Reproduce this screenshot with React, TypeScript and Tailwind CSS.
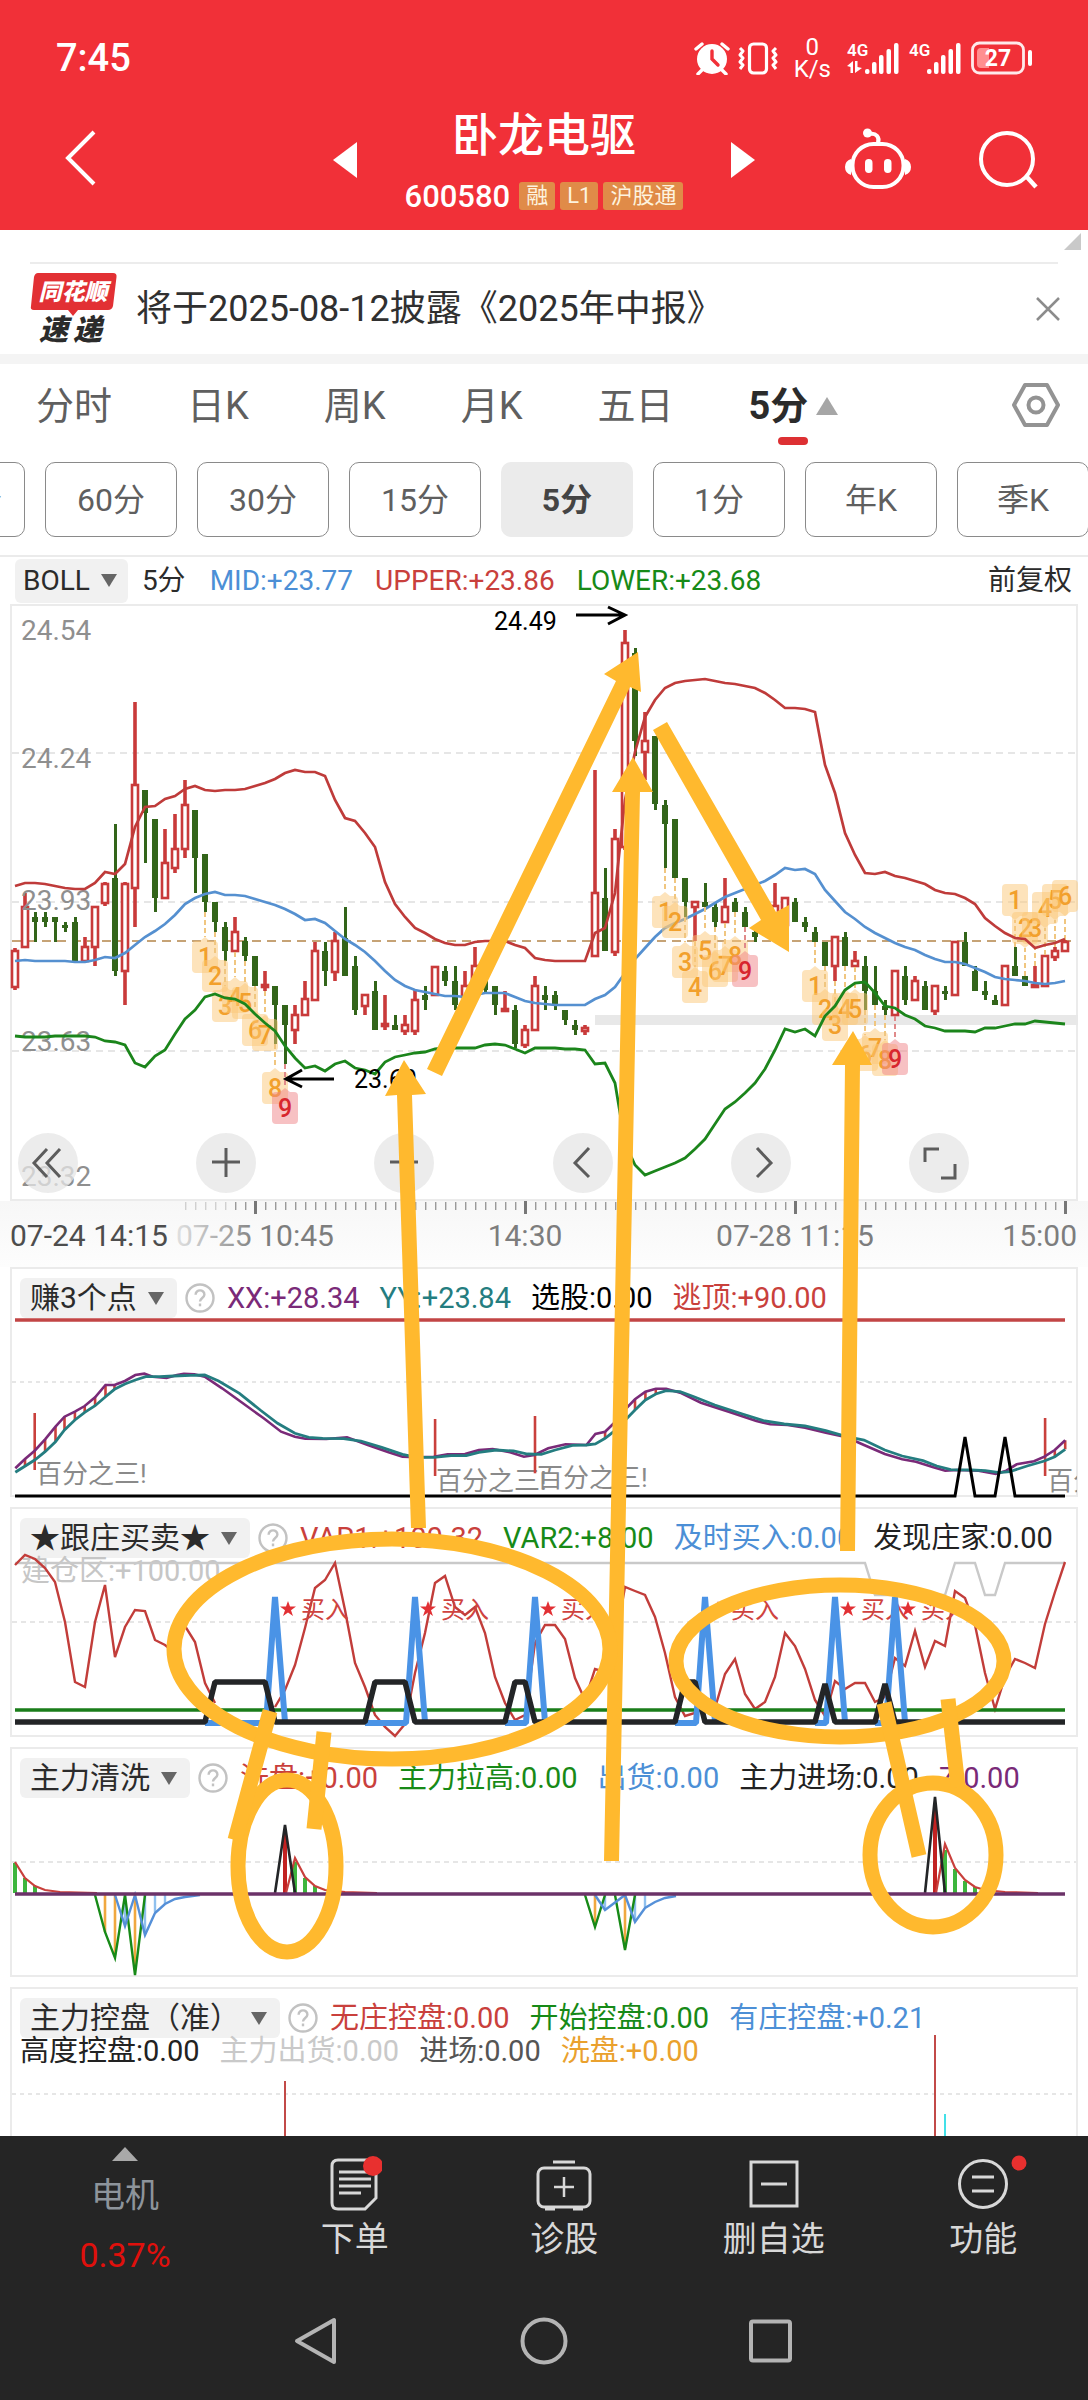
import type { ReactNode } from "react";

type Candle = [kind: "r" | "g", high: number, top: number, bottom: number, low: number];

const RED = "#bf3b3a";
const GREEN = "#33651a";
const ORANGE = "#ffb92e";

const barX = (i: number) => 15 + i * 10;

const candles: (Candle | null)[] = [
  ["r", 948, 951, 987, 990], ["r", 893, 907, 947, 948], ["g", 912, 917, 922, 942], ["g", 912, 917, 922, 927],
  ["g", 917, 917, 922, 942], ["g", 922, 925, 928, 932], ["g", 917, 922, 962, 962], ["r", 937, 947, 961, 962],
  ["r", 906, 907, 947, 966], ["r", 882, 884, 903, 906], ["g", 824, 878, 971, 976], ["r", 882, 884, 971, 1005],
  ["r", 702, 785, 888, 927], ["g", 790, 790, 813, 863], ["g", 819, 819, 898, 912], ["r", 829, 863, 898, 899],
  ["r", 814, 849, 868, 873], ["r", 780, 805, 849, 858], ["g", 810, 810, 858, 893], ["g", 854, 854, 902, 912],
  ["g", 902, 902, 922, 932], ["g", 922, 927, 951, 961], ["r", 917, 932, 951, 952], ["g", 937, 941, 956, 961],
  ["g", 956, 956, 986, 986], ["r", 971, 985, 987, 991], ["g", 986, 986, 1005, 1044], ["g", 1005, 1005, 1025, 1064],
  ["r", 1005, 1015, 1030, 1044], ["r", 981, 999, 1015, 1016], ["r", 942, 951, 1000, 1001], ["g", 942, 951, 971, 986],
  ["r", 932, 941, 972, 981], ["g", 907, 938, 976, 976], ["g", 956, 966, 1010, 1015], ["r", 994, 995, 1006, 1015],
  ["g", 981, 991, 1030, 1030], ["r", 995, 1024, 1026, 1030], ["g", 1015, 1025, 1030, 1030], ["r", 1015, 1025, 1031, 1035],
  ["r", 990, 1000, 1031, 1035], ["g", 986, 995, 1000, 1010], ["r", 966, 967, 995, 996], ["g", 966, 971, 981, 986],
  ["g", 966, 981, 1005, 1010], ["r", 971, 986, 997, 1005], ["r", 947, 966, 987, 990], ["g", 966, 976, 990, 994],
  ["g", 986, 986, 1005, 1015], ["r", 991, 1009, 1011, 1012], ["g", 1005, 1010, 1044, 1048], ["r", 1025, 1030, 1045, 1048],
  ["r", 976, 986, 1030, 1031], ["g", 986, 995, 1000, 1010], ["g", 991, 995, 1005, 1010], ["g", 1010, 1010, 1020, 1025],
  ["g", 1020, 1025, 1030, 1035], ["r", 1025, 1028, 1031, 1035], ["r", 770, 893, 956, 957], ["g", 868, 898, 951, 951],
  ["r", 829, 839, 952, 956], ["r", 630, 643, 847, 850], ["g", 648, 653, 741, 756], ["r", 712, 741, 752, 780],
  ["g", 736, 736, 804, 810], ["g", 800, 805, 824, 868], ["g", 819, 819, 878, 878], ["g", 878, 878, 902, 917],
  ["r", 901, 902, 907, 941], ["g", 883, 902, 907, 907], ["g", 902, 907, 922, 927], ["r", 878, 907, 922, 923],
  ["g", 898, 902, 912, 912], ["g", 907, 912, 927, 927], ["g", 925, 932, 937, 942], null,
  ["r", 883, 906, 930, 932], ["r", 897, 898, 925, 926], ["g", 898, 902, 922, 922], ["g", 917, 922, 927, 932],
  ["g", 927, 932, 942, 942], ["g", 942, 942, 966, 966], ["r", 936, 937, 966, 981], ["g", 932, 937, 966, 966],
  ["r", 951, 961, 966, 967], ["g", 956, 966, 991, 1010], ["g", 966, 991, 1005, 1005], ["g", 1000, 1006, 1010, 1015],
  ["r", 970, 971, 1015, 1016], ["g", 966, 976, 1000, 1005], ["r", 976, 981, 1000, 1001], ["g", 981, 986, 1010, 1010],
  ["r", 985, 986, 1011, 1015], ["g", 986, 991, 994, 1000], ["r", 941, 942, 995, 996], ["g", 932, 942, 966, 966],
  ["g", 966, 971, 991, 991], ["g", 981, 991, 995, 1000], ["g", 995, 1000, 1005, 1005], ["r", 965, 966, 1005, 1006],
  ["g", 947, 966, 976, 976], ["g", 976, 976, 986, 986], ["r", 966, 985, 987, 988], ["r", 955, 956, 986, 987],
  ["r", 947, 951, 957, 961], ["r", 940, 942, 951, 952],
];

const upper = [
  886, 883, 883, 884, 886, 888, 889, 889, 883, 872, 874, 864, 827, 807, 806, 799, 796, 789, 786, 790, 791, 790, 790, 789,
  786, 783, 779, 773, 770, 772, 772, 776, 800, 818, 821, 833, 847, 882, 904, 917, 928, 933, 939, 943, 945, 945, 942, 941,
  941, 941, 945, 948, 958, 960, 961, 961, 961, 961, 933, 928, 893, 800, 752, 717, 700, 688, 683, 681, 680, 679, 681, 683,
  684, 686, 688, 693, 700, 708, 708, 709, 712, 765, 793, 833, 855, 873, 874, 872, 876, 878, 881, 884, 890, 893, 894, 898,
  904, 918, 926, 933, 938, 939, 948, 945, 943, 939,
];
const middle = [
  961, 960, 961, 961, 961, 961, 962, 962, 960, 957, 958, 953, 945, 937, 931, 924, 915, 904, 898, 894, 892, 895, 895, 896,
  899, 902, 905, 909, 914, 920, 919, 923, 931, 939, 945, 952, 961, 971, 980, 986, 990, 992, 994, 996, 996, 997, 995, 993,
  993, 993, 997, 1001, 1003, 1004, 1005, 1005, 1005, 1005, 999, 995, 987, 973, 959, 948, 937, 928, 923, 919, 914, 909,
  903, 897, 893, 889, 885, 881, 875, 868, 870, 869, 874, 890, 901, 912, 919, 927, 933, 938, 943, 947, 950, 955, 959, 962,
  962, 964, 968, 972, 977, 979, 980, 981, 983, 984, 983, 981,
];
const lower = [
  1036, 1037, 1037, 1037, 1036, 1036, 1036, 1036, 1037, 1041, 1042, 1045, 1063, 1067, 1056, 1050, 1034, 1019, 1010, 997,
  994, 998, 999, 1004, 1014, 1023, 1031, 1046, 1058, 1068, 1066, 1071, 1064, 1061, 1068, 1070, 1074, 1062, 1057, 1055,
  1053, 1052, 1049, 1048, 1048, 1048, 1048, 1045, 1044, 1045, 1049, 1053, 1048, 1048, 1048, 1049, 1049, 1050, 1064, 1063,
  1083, 1143, 1165, 1175, 1171, 1167, 1163, 1158, 1149, 1139, 1124, 1109, 1102, 1093, 1083, 1069, 1050, 1029, 1032, 1029,
  1036, 1016, 1006, 990, 983, 982, 993, 1006, 1008, 1015, 1019, 1026, 1028, 1031, 1031, 1031, 1032, 1028, 1028, 1026,
  1024, 1024, 1021, 1022, 1023, 1024,
];

// [bar index, label, badge centre]
const marksBelow: [number, number, number][] = [
  [19, 1, 957], [20, 2, 976], [21, 3, 1006], [22, 4, 997], [23, 5, 1003], [24, 6, 1030], [25, 7, 1035], [26, 8, 1088], [27, 9, 1108],
  [65, 1, 912], [66, 2, 922], [67, 3, 962], [68, 4, 987], [69, 5, 951], [70, 6, 971], [71, 7, 966], [72, 8, 956], [73, 9, 971],
  [80, 1, 986], [81, 2, 1009], [82, 3, 1025], [83, 4, 1009], [84, 5, 1009], [85, 6, 1055], [86, 7, 1048], [87, 8, 1060], [88, 9, 1059],
];
const marksAbove: [number, number, number][] = [
  [100, 1, 900], [101, 2, 928], [102, 3, 928], [103, 4, 908], [104, 5, 900], [105, 6, 896],
];

const series = (values: number[], start = 0) => values.map((v, i) => `${barX(start + i)},${v}`).join(" ");

// Oscillator points are stored on a 1568 x 720 grid per panel.
const onGrid = (points: number[][], top: number) =>
  points.map(([x, y]) => `${(x / 1.441).toFixed(1)},${(top + y / 3).toFixed(1)}`).join(" ");

const yyLine = [
  [22, 637], [50, 600], [65, 575], [80, 545], [93, 510], [108, 480], [122, 457], [137, 437], [152, 410], [165, 388],
  [180, 372], [195, 360], [210, 350], [230, 350], [250, 348], [275, 346], [295, 345], [315, 363], [345, 400], [375, 450],
  [400, 490], [425, 520], [445, 532], [465, 535], [495, 536], [520, 543], [550, 562], [580, 583], [600, 592], [625, 592],
  [650, 587], [672, 587], [690, 577], [715, 570], [740, 573], [760, 582], [780, 583], [800, 570], [825, 556], [845, 555],
  [858, 552], [872, 535], [886, 512], [900, 482], [915, 450], [930, 420], [945, 402], [960, 392], [980, 395], [1000, 410],
  [1030, 435], [1070, 462], [1100, 482], [1130, 492], [1160, 498], [1190, 512], [1220, 530], [1245, 540], [1275, 570],
  [1300, 588], [1330, 602], [1350, 618], [1370, 629], [1400, 630], [1420, 632], [1440, 638], [1455, 635], [1480, 618],
  [1505, 603], [1520, 590], [1535, 568],
];
const xxLine = [
  [22, 625], [36, 597], [50, 572], [65, 538], [80, 500], [93, 470], [108, 455], [122, 438], [137, 412], [152, 375],
  [165, 375], [180, 363], [195, 345], [208, 341], [220, 350], [240, 354], [255, 345], [265, 341], [280, 343], [295, 350],
  [320, 385], [350, 430], [380, 475], [405, 515], [425, 530], [440, 536], [470, 537], [500, 532], [530, 555], [560, 577],
  [580, 590], [600, 592], [625, 590], [645, 583], [670, 582], [690, 570], [710, 567], [735, 577], [755, 590], [770, 585],
  [790, 565], [815, 553], [845, 555], [858, 522], [872, 515], [886, 487], [900, 450], [915, 418], [930, 395], [945, 386],
  [960, 386], [980, 398], [1010, 428], [1050, 455], [1090, 483], [1110, 493], [1135, 495], [1160, 503], [1190, 518],
  [1220, 532], [1245, 555], [1275, 582], [1300, 598], [1320, 605], [1345, 622], [1362, 632], [1380, 630], [1410, 632],
  [1435, 642], [1450, 632], [1465, 613], [1490, 604], [1505, 590], [1520, 570], [1535, 541],
];
// [x, from, to]
const spreadBars = [
  [36, 597, 620], [65, 538, 575], [80, 500, 545], [93, 470, 510], [108, 455, 480], [122, 438, 457], [137, 412, 437],
  [152, 375, 410], [165, 375, 388], [872, 515, 535], [886, 487, 512], [915, 418, 450], [930, 395, 420], [945, 386, 402],
  [1520, 570, 590], [1535, 541, 568],
  [50, 459, 630], [627, 477, 648], [771, 468, 640], [1506, 474, 648],
];

const varScale = (v: number) => Math.round(1500 + v / 3);
const varFirst = [
  195, 165, 177, 203, 247, 365, 545, 560, 365, 255, 472, 380, 330, 333, 420, 435, 460, 378, 425, 550, 610,
].map(varScale);
const varSecond = [
  620, 570, 495, 385, 265, 240, 190, 330, 490, 560, 645, 682, 708, 672, 520, 400, 250, 227, 320, 345, 320, 400, 530, 610,
  660, 645, 430, 375, 375, 418, 535, 600, 507, 515, 430, 262, 272, 285, 352, 460, 590, 648, 640, 600, 625, 522, 478, 583,
  627, 605, 530, 400, 437, 508, 600, 648, 543, 568, 548, 548, 605, 590, 475, 498, 393, 500, 423, 437, 272, 295, 375, 520,
  627, 530, 478, 490, 503, 372, 275, 187,
].map(varScale);
const buyPeaks: [number, number][] = [[275, 205], [415, 365], [535, 505], [705, 675], [835, 815], [895, 875]];

function Chip({ name }: { name: string }) {
  return (
    <button
      type="button"
      className="flex h-10 items-center gap-2.5 rounded-md bg-[#f1f1f1] pl-2.5 pr-3 text-[30px] leading-none text-[#2b2b2b]"
    >
      {name}
      <svg viewBox="0 0 18 13" className="w-4.5" aria-hidden="true">
        <path d="M1 0H17L9 13Z" fill="#666" />
      </svg>
    </button>
  );
}

function Help() {
  return (
    <button type="button" aria-label="指标说明" className="ml-2 mr-3 shrink-0">
      <svg viewBox="0 0 30 30" className="w-7.5" fill="none" stroke="#c2c2c2" strokeWidth="2.4">
        <circle cx="15" cy="15" r="13.5" />
        <path d="M10.6 11.8c0-6 9-5.6 8.8-.2-.2 3.4-4.4 3.4-4.4 7" />
        <path d="M15 20.5v2.8" />
      </svg>
    </button>
  );
}

type Item = [text: string, color: string];

function Values({ items }: { items: Item[] }) {
  return (
    <div className="flex gap-5 whitespace-nowrap text-[29px] leading-none">
      {items.map(([text, color]) => (
        <span key={text} className={color}>
          {text}
        </span>
      ))}
    </div>
  );
}

function Panel({
  name,
  items,
  extra,
  top,
  height,
  open = false,
  children,
}: {
  name: string;
  items: Item[];
  extra?: Item[];
  top: number;
  height: number;
  open?: boolean;
  children: ReactNode;
}) {
  return (
    <section
      className={`mx-2.5 border-2 border-[#ebebeb] bg-white ${open ? "border-b-0" : "mb-2.5"}`}
      aria-label={name}
    >
      <div className="flex h-[50px] items-center pl-2 pt-2">
        <Chip name={name} />
        <Help />
        <Values items={items} />
      </div>
      {extra && (
        <div className="flex h-[31px] items-center pb-1.5 pl-2">
          <Values items={extra} />
        </div>
      )}
      <svg viewBox={`12 ${top} 1064 ${height}`} className="block h-auto w-full overflow-visible" fill="none">
        {children}
      </svg>
    </section>
  );
}

function Badge({ i, n, y, from, above = false }: { i: number; n: number; y: number; from: number; above?: boolean }) {
  const x = barX(i);
  const red = n === 9;
  const edge = above ? y + 20 : y - 20;
  return (
    <g>
      <path d={`M${x} ${from}V${edge}`} stroke={red ? "#e08a8a" : "#f0c680"} strokeWidth="2" strokeDasharray="5 3" />
      <path
        d={
          above
            ? `M${x - 9} ${y - 16}h18q4 0 4 4v24q0 4 -4 4h-4l-5 4l-5 -4h-4q-4 0 -4 -4v-24q0 -4 4 -4z`
            : `M${x - 9} ${y - 16}h4l5 -4l5 4h4q4 0 4 4v24q0 4 -4 4h-18q-4 0 -4 -4v-24q0 -4 4 -4z`
        }
        fill={red ? "#f08488" : "#fcc778"}
        fillOpacity="0.5"
      />
      <text x={x} y={y + 9} textAnchor="middle" fontSize="25" fontWeight="500" fill={red ? "#d8262e" : "#f2a02c"}>
        {n}
      </text>
    </g>
  );
}

function PriceChart() {
  return (
    <svg viewBox="12 606 1064 593" className="block h-auto w-full overflow-visible" fill="none">
      <rect x="595" y="1015" width="483" height="10" fill="#e8e8e8" />
      {[753, 902, 1051].map((y) => (
        <path key={y} d={`M12 ${y}H1076`} stroke="#dedede" strokeWidth="1.5" strokeDasharray="7 5" />
      ))}
      <path d="M12 941H1076" stroke="#c6a376" strokeWidth="1.8" strokeDasharray="9 6" />
      {candles.map((c, i) => {
        if (!c) return null;
        const [kind, high, top, bottom, low] = c;
        const x = barX(i);
        return kind === "g" ? (
          <g key={i} fill={GREEN}>
            <rect x={x - 1} y={high} width="3" height={low - high} />
            <rect x={x - 3} y={top} width="6" height={Math.max(bottom - top, 2)} />
          </g>
        ) : (
          <g key={i} stroke="#c93a3a">
            <path d={`M${x} ${high}V${top}M${x} ${bottom}V${low}`} strokeWidth="3.6" />
            <rect x={x - 3} y={top} width="6" height={Math.max(bottom - top, 2)} fill="#fff" strokeWidth="2.6" />
          </g>
        );
      })}
      <polyline points={series(middle)} stroke="#5590d0" strokeWidth="2.7" />
      <g fill="#8f8f8f" fontSize="28">
        <text x="21" y="640">24.54</text>
        <text x="21" y="768">24.24</text>
        <text x="21" y="910">23.93</text>
        <text x="21" y="1051">23.63</text>
        <text x="21" y="1186">23.32</text>
      </g>
      {marksBelow.map(([i, n, y]) => (
        <Badge key={i} i={i} n={n} y={y} from={candles[i]?.[4] ?? y} />
      ))}
      {marksAbove.map(([i, n, y]) => (
        <Badge key={i} i={i} n={n} y={y} from={candles[i]?.[1] ?? y} above />
      ))}
      <polyline points={series(upper)} stroke={RED} strokeWidth="2.7" />
      <polyline points={series(lower)} stroke="#1b851b" strokeWidth="2.8" />
      <g fill="#000" fontSize="25">
        <text x="494" y="630">24.49</text>
        <text x="354" y="1088">23.60</text>
      </g>
      <g stroke="#000" strokeWidth="3">
        <path d="M576 615H624M608 607L625 615L608 624" />
        <path d="M334 1079H287M302 1070L286 1079L302 1087" />
      </g>
    </svg>
  );
}

const controls: [string, string][] = [
  ["回到最早", "M29 16L16 30L29 44M42 16L29 30L42 44"],
  ["放大", "M30 15V44M16 29H44"],
  ["缩小", "M16 29H44"],
  ["向左", "M36 15L22 30L36 44"],
  ["向右", "M26 15L40 30L26 44"],
  ["全屏", "M16 29V16H30M32 45H46V31"],
];

function TimeAxis() {
  const ticks = Array.from({ length: 89 }, (_, i) => 185 + i * 10);
  return (
    <svg viewBox="12 1201 1064 66" className="block h-auto w-full overflow-visible">
      <defs>
        <linearGradient id="axisFade" gradientUnits="userSpaceOnUse" x1="175" x2="260" y1="0" y2="0">
          <stop offset="0" stopColor="#e2e2e2" />
          <stop offset="1" stopColor="#7d7d7d" />
        </linearGradient>
      </defs>
      {ticks.map((x, i) => (
        <rect key={x} x={x} y="1202" width="1.4" height="8" fill={i < 5 ? "#d0d0d0" : "#9a9a9a"} />
      ))}
      {[254, 524, 794, 1064].map((x) => (
        <rect key={x} x={x} y="1201" width="3" height="13" fill="#777" />
      ))}
      <g fontSize="30" fill="#7d7d7d">
        <text x="10" y="1246" fill="#4d4d4d">07-24 14:15</text>
        <text x="176" y="1246" fill="url(#axisFade)">07-25 10:45</text>
        <text x="525" y="1246" textAnchor="middle">14:30</text>
        <text x="795" y="1246" textAnchor="middle">07-28 11:15</text>
        <text x="1077" y="1246" textAnchor="end">15:00</text>
      </g>
    </svg>
  );
}

function Annotations() {
  return (
    <svg
      viewBox="0 604 1088 1532"
      className="pointer-events-none absolute inset-x-0 top-0 h-auto w-full"
      fill={ORANGE}
      aria-hidden="true"
    >
      <path d="M427 1069L616 681L604 674L638 652L641 692L630 687L442 1076Z" />
      <path d="M653 730L761 920L749 928L789 952L789 905L776 912L667 722Z" />
      <path d="M604 1861L625 792H612L633 757L653 792H640L619 1861Z" />
      <path d="M411 1528L397 1095L385 1096L404 1060L426 1094L412 1095L426 1528Z" />
      <path d="M840 1551L845 1065H832L853 1031L872 1065H860L855 1551Z" />
      <g fill="none" stroke={ORANGE} strokeWidth="15">
        <ellipse cx="392" cy="1649" rx="218" ry="110" />
        <ellipse cx="840" cy="1661" rx="164" ry="76" />
        <ellipse cx="287" cy="1866" rx="49" ry="86" />
        <ellipse cx="933" cy="1855" rx="63" ry="72" />
        <path d="M270 1711L235 1840M324 1732L314 1829M884 1703L919 1856M948 1699L958 1787" />
      </g>
    </svg>
  );
}

function Signal({ arrows = false }: { arrows?: boolean }) {
  return (
    <svg viewBox="0 0 52 34" className="w-13 overflow-visible" fill="#fff" aria-label="4G">
      <text x="0" y="15" fontSize="17" fontWeight="600">4G</text>
      {arrows && <path d="M0 25L6 20V32H3.500V26ZM8 20H10.500V26L15 27L8 32Z" />}
      <rect x="18" y="28" width="4.500" height="5" rx="2" />
      <rect x="25" y="21" width="4.500" height="12" rx="2" />
      <rect x="32" y="14" width="4.500" height="19" rx="2" />
      <rect x="39.500" y="8" width="4.500" height="25" rx="2" />
      <rect x="47" y="2" width="4.500" height="31" rx="2" />
    </svg>
  );
}

function StatusBar() {
  return (
    <div className="flex h-[100px] items-center justify-between pl-14 pr-[55px] pt-4 text-white">
      <span className="text-[38px] font-medium leading-none">7:45</span>
      <div className="flex items-center">
        <svg viewBox="0 0 36 34" className="w-9" aria-label="闹钟">
          <circle cx="18" cy="18" r="15" fill="#fff" />
          <path d="M2 8L8 3M28 3L34 8M8 29L4 33M28 29L32 33" stroke="#fff" strokeWidth="3.400" strokeLinecap="round" />
          <path d="M18 10V18L24 24" stroke="#f13038" strokeWidth="3.400" fill="none" strokeLinecap="round" />
        </svg>
        <svg viewBox="0 0 40 34" className="ml-2 w-10" fill="none" stroke="#fff" strokeLinejoin="round" aria-label="振动">
          <rect x="11.500" y="3" width="17" height="29" rx="4" strokeWidth="3.200" />
          <path d="M2 7L5 10L2 14L5 17L2 21L5 24L2 28M38 7L35 10L38 14L35 17L38 21L35 24L38 28" strokeWidth="3" />
        </svg>
        <span className="mx-4 text-center text-[24px] leading-[22px]">
          0
          <br />
          K/s
        </span>
        <Signal arrows />
        <span className="w-2.5" />
        <Signal />
        <svg viewBox="0 0 62 34" className="ml-2.5 w-[62px]" aria-label="电量 27%">
          <rect x="1.500" y="2" width="51" height="30" rx="7" fill="none" stroke="#fff" strokeOpacity="0.9" strokeWidth="2.800" />
          <path d="M10 7H18V27H10Q6 27 6 23V11Q6 7 10 7Z" fill="#ff8f90" />
          <rect x="57" y="9" width="4" height="16" rx="2" fill="#fff" />
          <text x="27" y="25" textAnchor="middle" fontSize="23" fontWeight="700" fill="#fff">27</text>
        </svg>
      </div>
    </div>
  );
}

function TitleBar() {
  return (
    <div className="grid h-[130px] grid-cols-[1fr_422px_1fr] items-start text-white">
      <button type="button" aria-label="返回" className="ml-[62px] mt-[29px] w-9">
        <svg viewBox="0 0 36 58" fill="none" stroke="#fff" strokeWidth="4">
          <path d="M32 3L6 29L32 55" />
        </svg>
      </button>
      <div className="flex items-start justify-between">
        <button type="button" aria-label="上一只" className="mt-[42px] w-6">
          <svg viewBox="0 0 24 36" fill="#fff">
            <path d="M24 0V36L0 18Z" />
          </svg>
        </button>
        <div className="flex flex-col items-center pt-2.5">
          <h1 className="text-[46px] font-medium leading-[50px]">卧龙电驱</h1>
          <div className="mt-4.5 flex h-9 items-center gap-[5px] text-[22px]">
            <span className="mr-1 text-[31px] font-medium leading-none">600580</span>
            {["融", "L1", "沪股通"].map((tag) => (
              <span key={tag} className="flex h-7 items-center rounded-[3px] bg-[#e08b48] px-[7px] leading-none text-[#fdf3df]">
                {tag}
              </span>
            ))}
          </div>
        </div>
        <button type="button" aria-label="下一只" className="mt-[42px] w-6">
          <svg viewBox="0 0 24 36" fill="#fff">
            <path d="M0 0V36L24 18Z" />
          </svg>
        </button>
      </div>
      <div className="mt-[27px] flex justify-end gap-[66px] pr-[50px]">
        <button type="button" aria-label="智能助手" className="w-17">
          <svg viewBox="0 0 68 64" fill="none" stroke="#fff" strokeWidth="4">
            <rect x="8.500" y="17" width="51" height="43" rx="21" />
            <path d="M34 16C36 10 32 6 26 7" strokeLinecap="round" />
            <circle cx="23.500" cy="6" r="4.500" fill="#fff" stroke="none" />
            <path d="M7 32Q1 34 1 40Q1 46 7 48ZM61 32Q67 34 67 40Q67 46 61 48Z" fill="#fff" stroke="none" />
            <rect x="21" y="32" width="7.500" height="14" rx="3.700" fill="#fff" stroke="none" />
            <rect x="40" y="32" width="7.500" height="14" rx="3.700" fill="#fff" stroke="none" />
          </svg>
        </button>
        <button type="button" aria-label="搜索" className="w-[60px]">
          <svg viewBox="0 0 60 64" fill="none" stroke="#fff" strokeWidth="4">
            <circle cx="29" cy="32" r="26" />
            <path d="M48 49L58 60" strokeWidth="4.500" />
          </svg>
        </button>
      </div>
    </div>
  );
}

function Notice() {
  return (
    <div className="flex h-[90px] items-center pl-7.5 pr-7">
      <svg viewBox="0 0 88 72" className="w-[88px] shrink-0 overflow-visible" aria-label="同花顺速递">
        <path d="M8 0H83Q87 0 86.500 4L83 33Q82 37 78 37H48L43 43L38 37H4Q0 37 1 33L4 4Q5 0 8 0Z" fill="#e23034" />
        <g fontWeight="900" fontStyle="italic">
          <text x="43" y="27" textAnchor="middle" fontSize="23" fill="#fff">同花顺</text>
          <text x="9" y="67" fontSize="29" fill="#2b2b2b">速</text>
          <text x="43" y="67" fontSize="29" fill="#2b2b2b">递</text>
        </g>
      </svg>
      <a href="#notice" className="ml-4.5 flex-1 whitespace-nowrap text-[36px] leading-none text-[#303030]">
        将于2025-08-12披露《2025年中报》
      </a>
      <button type="button" aria-label="关闭" className="w-6">
        <svg viewBox="0 0 24 24" fill="none" stroke="#8c8c8c" strokeWidth="2.500">
          <path d="M1 1L23 23M23 1L1 23" />
        </svg>
      </button>
    </div>
  );
}

function PeriodTabs() {
  return (
    <nav className="flex h-[98px] items-center pl-9 pr-7 text-[38px] leading-none text-[#5f5f5f]" aria-label="周期">
      <div className="flex flex-1 items-center gap-[75px] whitespace-nowrap">
        {["分时", "日K", "周K", "月K", "五日"].map((t) => (
          <button type="button" key={t} className="pb-3.5">
            {t}
          </button>
        ))}
        <button type="button" aria-current="true" className="relative flex items-center gap-2 pb-3.5 font-bold text-[#2b2b2b]">
          5分
          <svg viewBox="0 0 22 18" className="w-5.5" aria-hidden="true">
            <path d="M11 0L22 18H0Z" fill="#a6a6a6" />
          </svg>
          <span className="absolute -bottom-1.5 left-1/2 h-2 w-7.5 -translate-x-1/2 rounded-full bg-[#dd3033]" />
        </button>
      </div>
      <button type="button" aria-label="图表设置" className="mb-4 w-12">
        <svg viewBox="0 0 48 48" fill="none" stroke="#939393" strokeWidth="4" strokeLinejoin="round">
          <path d="M13 4H35L46 24L35 44H13L2 24Z" />
          <circle cx="24" cy="24" r="7.500" />
        </svg>
      </button>
    </nav>
  );
}

function PeriodButtons() {
  return (
    <div className="flex gap-5 overflow-hidden pb-[18px] text-[32px] leading-none text-[#5f5f5f]">
      {["120分", "60分", "30分", "15分", "5分", "1分", "年K", "季K"].map((t, i) => (
        <button
          type="button"
          key={t}
          className={`h-[75px] w-33 shrink-0 rounded-[10px] ${
            t === "5分" ? "bg-[#ebebeb] font-bold text-[#444]" : "border border-[#8a8a8a]"
          } ${i === 0 ? "-ml-[107px]" : ""}`}
        >
          {t}
        </button>
      ))}
    </div>
  );
}

function BottomBar() {
  return (
    <footer className="h-[264px] bg-[#252525] text-[#d8d8d8]">
      <div className="grid h-[160px] grid-cols-[250px_repeat(4,1fr)] text-[34px] leading-none">
        <button type="button" className="flex flex-col items-center pt-[11px]">
          <svg viewBox="0 0 26 14" className="w-6.5" aria-hidden="true">
            <path d="M13 0L26 14H0Z" fill="#a9a9a9" />
          </svg>
          <span className="mt-[17px] text-[#8d949b]">电机</span>
          <span className="mt-[26px] text-[#e0100c]">0.37%</span>
        </button>
        <button type="button" className="flex flex-col items-center pt-5">
          <svg viewBox="0 0 54 56" className="h-14 w-13.5" fill="none" stroke="#d8d8d8" strokeWidth="3">
            <path d="M10 4H48V42L37 53H10Q4 53 4 47V10Q4 4 10 4Z" />
            <path d="M11 16H43M11 23H43M11 30H43M11 37H33" />
            <circle cx="45" cy="10" r="10" fill="#e8302f" stroke="none" />
          </svg>
          <span className="mt-2.5">下单</span>
        </button>
        <button type="button" className="flex flex-col items-center pt-5">
          <svg viewBox="0 0 56 56" className="size-14" fill="none" stroke="#d8d8d8" strokeWidth="3">
            <path d="M17 6H39" />
            <rect x="2" y="12" width="52" height="39" rx="6" />
            <path d="M28 21V41M18 31H38" strokeWidth="2.500" />
            <path d="M9 53H19M37 53H47" />
          </svg>
          <span className="mt-2.5">诊股</span>
        </button>
        <button type="button" className="flex flex-col items-center pt-5">
          <svg viewBox="0 0 56 56" className="size-14" fill="none" stroke="#d8d8d8" strokeWidth="3">
            <rect x="5" y="6" width="46" height="44" />
            <path d="M15 28H41" />
          </svg>
          <span className="mt-2.5">删自选</span>
        </button>
        <button type="button" className="flex flex-col items-center pt-5">
          <svg viewBox="0 0 56 56" className="size-14 overflow-visible" fill="none" stroke="#d8d8d8" strokeWidth="3">
            <circle cx="28" cy="28" r="23.500" />
            <path d="M17 21H39M17 35H39" />
            <circle cx="64" cy="7" r="7.500" fill="#e8302f" stroke="none" />
          </svg>
          <span className="mt-2.5">功能</span>
        </button>
      </div>
      <div className="flex items-center justify-center gap-[179px] pt-[20px]">
        <button type="button" aria-label="系统返回" className="w-12">
          <svg viewBox="0 0 48 50" fill="none" stroke="#b4b4b4" strokeWidth="4" strokeLinejoin="round">
            <path d="M41 4V46L4 25Z" />
          </svg>
        </button>
        <button type="button" aria-label="主屏幕" className="w-12">
          <svg viewBox="0 0 48 50" fill="none" stroke="#b4b4b4" strokeWidth="4">
            <circle cx="24" cy="25" r="21.500" />
          </svg>
        </button>
        <button type="button" aria-label="最近任务" className="w-12">
          <svg viewBox="0 0 48 50" fill="none" stroke="#b4b4b4" strokeWidth="4">
            <rect x="4" y="5.500" width="39" height="39" rx="2" />
          </svg>
        </button>
      </div>
    </footer>
  );
}

export default function App() {
  return (
    <div className="overflow-hidden bg-white font-['Roboto','Noto_Sans_CJK_SC',sans-serif]">
      <header className="bg-[#f13038]">
        <StatusBar />
        <TitleBar />
      </header>

      <div className="mx-7.5 flex h-[34px] items-start justify-end border-b-2 border-[#ececec] pt-[3px]">
        <svg viewBox="0 0 17 17" className="-mr-[23px] w-[17px]" aria-hidden="true">
          <path d="M17 0V17H0Z" fill="#c9c9c9" />
        </svg>
      </div>
      <Notice />
      <div className="h-2.5 bg-[#f4f4f4]" />
      <PeriodTabs />
      <PeriodButtons />

      <div className="flex h-[49px] items-center border-t-2 border-[#ebebeb] pl-[15px] pr-4 text-[28px] leading-none text-[#2b2b2b]">
        <button type="button" className="flex h-11 items-center gap-2.5 rounded-md bg-[#f1f1f1] pl-2 pr-2.5">
          BOLL
          <svg viewBox="0 0 18 13" className="w-4.5" aria-hidden="true">
            <path d="M1 0H17L9 13Z" fill="#666" />
          </svg>
        </button>
        <span className="ml-3.5 mr-6">5分</span>
        <div className="flex flex-1 gap-[22px] whitespace-nowrap">
          <span className="text-[#4c8fd6]">MID:+23.77</span>
          <span className="text-[#c9403c]">UPPER:+23.86</span>
          <span className="text-[#178a17]">LOWER:+23.68</span>
        </div>
        <span>前复权</span>
      </div>

      <main className="relative h-[1532px] overflow-hidden">
        <section className="relative mx-2.5 border-2 border-[#ebebeb]" aria-label="K线图">
          <PriceChart />
          <div className="absolute inset-x-0 bottom-1.5 flex justify-between pl-1.5 pr-[107px]">
            {controls.map(([label, d]) => (
              <button type="button" key={label} aria-label={label} className="size-15 rounded-full bg-[#e6e6e6]/75">
                <svg viewBox="0 0 60 60" fill="none" stroke="#5c5c5c" strokeWidth="3">
                  <path d={d} />
                </svg>
              </button>
            ))}
          </div>
        </section>
        <div className="bg-linear-to-b from-[#f7f7f7] to-[#fdfdfd] px-3">
          <TimeAxis />
        </div>

        <Panel
          name="赚3个点"
          top={1319}
          height={176}
          items={[
            ["XX:+28.34", "text-[#7a2a78]"],
            ["YY:+23.84", "text-[#247d80]"],
            ["选股:0.00", "text-black"],
            ["逃顶:+90.00", "text-[#c9403c]"],
          ]}
        >
          <path d="M12 1382H1076" stroke="#e6e6e6" strokeWidth="2" strokeDasharray="4 4" />
          <g fontSize="26" fill="#8a8a8a">
            <text x="36" y="1483">百分之三!</text>
            <text x="436" y="1490">百分之三!</text>
            <text x="537" y="1487">百分之三!</text>
            <svg x="1040" y="1460" width="37" height="40" viewBox="1040 1460 37 40">
              <text x="1047" y="1490">百分之三!</text>
            </svg>
          </g>
          {spreadBars.map(([x, a, b]) => (
            <polyline key={x} points={onGrid([[x, a], [x, b]], 1260)} stroke="#c9403c" strokeWidth="2.6" />
          ))}
          <polyline points={onGrid(xxLine, 1260)} stroke="#7a2a78" strokeWidth="2.6" />
          <polyline points={onGrid(yyLine, 1260)} stroke="#247d80" strokeWidth="2.8" />
          <path d="M15 1320H1065" stroke="#c24545" strokeWidth="3.4" />
          <path d="M15 1496H955L965 1437L975 1496H995L1005 1437L1015 1496H1065" stroke="#000" strokeWidth="3" />
        </Panel>

        <Panel
          name="★跟庄买卖★"
          top={1559}
          height={176}
          items={[
            ["VAR1:+100.32", "text-[#c9403c]"],
            ["VAR2:+8.00", "text-[#178a17]"],
            ["及时买入:0.00", "text-[#4c8fd6]"],
            ["发现庄家:0.00", "text-[#222]"],
          ]}
        >
          <path d="M12 1622H1076" stroke="#e6e6e6" strokeWidth="2" strokeDasharray="5 4" />
          <text x="21" y="1581" fontSize="29" fill="#c6c6c6">建仓区:+100.00</text>
          <path d="M15 1563H865L875 1595H945L955 1563H975L985 1595H995L1005 1563H1065" stroke="#c9c9c9" strokeWidth="2.4" />
          <g stroke="#c23d3a" strokeWidth="2.4">
            <polyline points={series(varFirst)} />
            <polyline points={series(varSecond, 26)} />
          </g>
          <path d="M15 1710H1065" stroke="#1a7d1a" strokeWidth="3.4" />
          {buyPeaks.map(([x, start]) => (
            <g key={x}>
              <path
                d={`M${start} 1723H${x - 9}L${x} 1597L${x + 10} 1722`}
                stroke="#4a93e6"
                strokeWidth="6"
                strokeLinejoin="bevel"
              />
              <path
                d="M0 -8L2 -2.500L8 -2.500L3 1.200L5 7L0 3.500L-5 7L-3 1.200L-8 -2.500L-2 -2.500Z"
                transform={`translate(${x + 13} 1609)`}
                fill="#e23034"
              />
              <text x={x + 26} y="1618" fontSize="24" fill="#cf4340">买入</text>
            </g>
          ))}
          <path
            d="M15 1722H205L215 1682H265L275 1722H365L375 1682H405L415 1722H505L515 1682H525L535 1722H675L685 1682H695L705 1722H815L825 1684L835 1722H875L885 1684L895 1722H1065"
            stroke="#232527"
            strokeWidth="5.500"
            strokeLinejoin="bevel"
          />
        </Panel>

        <Panel
          name="主力清洗"
          top={1799}
          height={176}
          items={[
            ["洗盘:+0.00", "text-[#c9403c]"],
            ["主力拉高:0.00", "text-[#178a17]"],
            ["出货:0.00", "text-[#4c8fd6]"],
            ["主力进场:0.00", "text-[#222]"],
            ["Z:0.00", "text-[#7a2a78]"],
          ]}
        >
          <path d="M12 1862H1076" stroke="#e6e6e6" strokeWidth="2" strokeDasharray="5 4" />
          <path
            d="M15 1863V1893M25 1878V1893M35 1886V1893M295 1862V1893M305 1878V1893M315 1886V1893M945 1850V1893M955 1869V1893M965 1881V1893M975 1887V1893"
            stroke="#3db53d"
            strokeWidth="4"
          />
          <path d="M105 1895V1932M115 1895V1955M135 1895V1970M595 1895V1925M625 1895V1948" stroke="#f0a840" strokeWidth="2.600" />
          <path d="M125 1895V1922M145 1895V1932M155 1895V1912M165 1895V1904M605 1895V1908M635 1895V1920M645 1895V1907" stroke="#8fc0ee" strokeWidth="2.400" />
          <g stroke="#178a17" strokeWidth="2.400">
            <path d="M95 1895L105 1932L115 1958L125 1895L135 1975L145 1895" />
            <path d="M585 1895L595 1927L605 1895M615 1895L625 1950L635 1895" />
          </g>
          <g stroke="#5590d8" strokeWidth="2.400">
            <path d="M115 1895L125 1926L135 1895L145 1935L155 1913L165 1904L175 1899L185 1897L200 1895" />
            <path d="M595 1895L605 1910L625 1895L635 1922L645 1908L655 1902L665 1898L676 1896" />
          </g>
          <path d="M285 1830V1893M935 1805V1893" stroke="#c22222" strokeWidth="4" />
          <g stroke="#c9403c" strokeWidth="2.200">
            <path d="M15 1862L25 1878L35 1886L45 1890L60 1892L97 1893" />
            <path d="M286 1893L295 1858L305 1877L315 1886L325 1890L345 1892L377 1893" />
            <path d="M936 1893L945 1844L955 1868L965 1880L975 1887L985 1890L1005 1892L1038 1893" />
          </g>
          <path d="M275 1893L285 1825L295 1893M925 1893L935 1797L945 1893" stroke="#232527" strokeWidth="2.600" />
          <path d="M15 1894H1065" stroke="#6b3268" strokeWidth="3.600" />
        </Panel>

        <Panel
          name="主力控盘（准）"
          top={2070}
          height={90}
          open
          items={[
            ["无庄控盘:0.00", "text-[#c9403c]"],
            ["开始控盘:0.00", "text-[#178a17]"],
            ["有庄控盘:+0.21", "text-[#4c8fd6]"],
          ]}
          extra={[
            ["高度控盘:0.00", "text-[#222]"],
            ["主力出货:0.00", "text-[#c9c9c9]"],
            ["进场:0.00", "text-[#555]"],
            ["洗盘:+0.00", "text-[#eaa12e]"],
          ]}
        >
          <path d="M12 2094H1076" stroke="#e6e6e6" strokeWidth="2" strokeDasharray="4 4" />
          <path d="M285 2081V2160M935 2035V2160" stroke="#c24a48" strokeWidth="2" />
          <path d="M945 2114V2160" stroke="#43e0e8" strokeWidth="2" />
        </Panel>
        <Annotations />
      </main>
      <BottomBar />
    </div>
  );
}
